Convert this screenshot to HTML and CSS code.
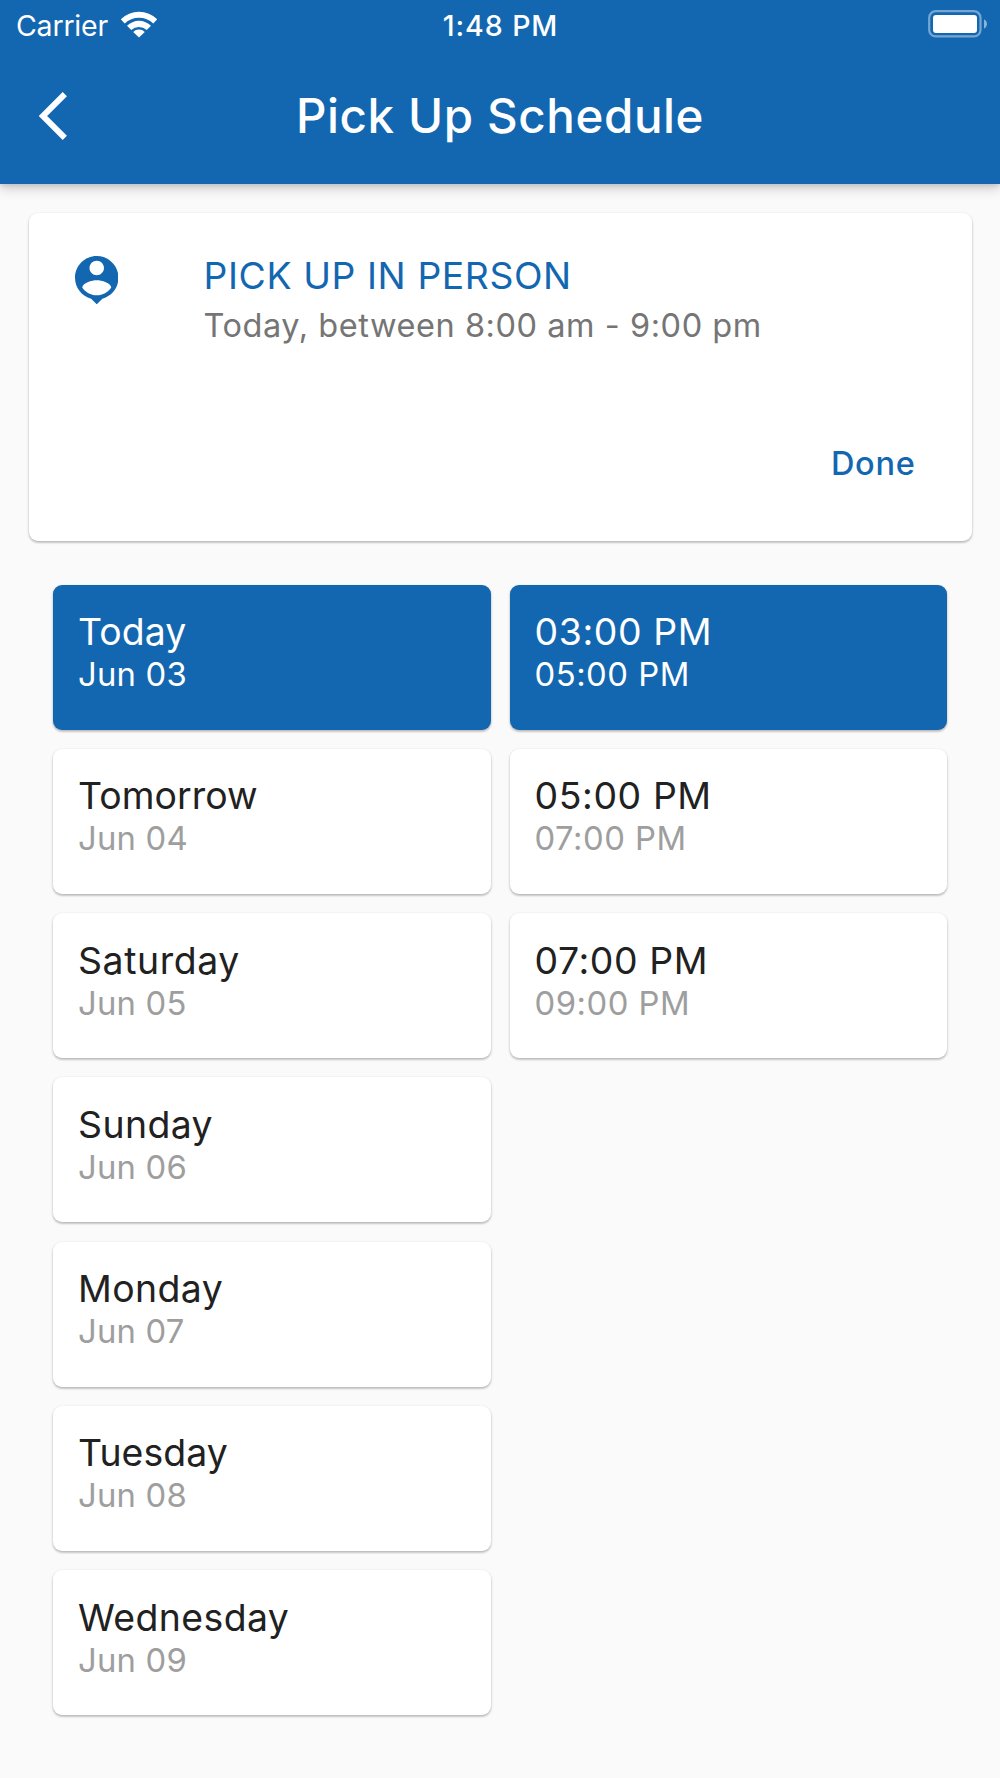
FILE: index.html
```html
<!DOCTYPE html>
<html lang="en">
<head>
<meta charset="utf-8">
<title>Pick Up Schedule</title>
<link rel="stylesheet" href="styles.css">
</head>
<body>
<header class="app-header">
  <div class="status-bar">
    <div class="status-left">
      <span class="carrier">Carrier</span>
      <svg class="wifi" viewBox="0 0 38 28" aria-hidden="true">
        <path d="M.8 9.200a26 26 0 0 1 36.400 0l-3.900 4.200a20.700 20.700 0 0 0-28.600 0z"/>
        <path d="M7 15.800a17 17 0 0 1 24 0l-4.300 4.100a11.600 11.600 0 0 0-15.400 0z"/>
        <path d="M13.200 22a8 8 0 0 1 11.600 0L19 27.600z"/>
      </svg>
    </div>
    <span class="clock">1:48 PM</span>
    <div class="status-right">
      <svg class="battery" viewBox="0 0 60 28" aria-hidden="true">
        <rect class="battery-shell" x="1.200" y="1.200" width="51.300" height="25.200" rx="6.500"/>
        <rect x="5" y="5" width="44" height="18" rx="3"/>
        <path class="battery-cap" d="M56 9.300c4 2.200 4 7 0 9.400z"/>
      </svg>
    </div>
  </div>
  <div class="toolbar">
    <svg class="back" viewBox="0 0 28 48" aria-hidden="true"><path d="M25.800 2.200 4 24l21.800 21.800"/></svg>
    <h1 class="title">Pick Up Schedule</h1>
  </div>
</header>
<main>
  <section class="card summary">
    <svg class="pin" viewBox="3 2 18 20" aria-hidden="true"><path d="M12 2c-4.970 0-9 4.030-9 9 0 4.170 2.840 7.670 6.690 8.690L12 22l2.310-2.310C18.160 18.670 21 15.170 21 11c0-4.970-4.030-9-9-9zm0 2c1.660 0 3 1.340 3 3s-1.340 3-3 3-3-1.340-3-3 1.340-3 3-3zm0 14.300c-2.500 0-4.710-1.280-6-3.220.030-1.990 4-3.080 6-3.080 1.990 0 5.970 1.090 6 3.080-1.290 1.940-3.500 3.220-6 3.220z"/></svg>
    <div class="summary-text">
      <h2 class="method">PICK UP IN PERSON</h2>
      <p class="window">Today, between 8:00 am - 9:00 pm</p>
    </div>
    <a class="done">Done</a>
  </section>
  <section class="picker">
    <div class="column days">
      <div class="card slot selected"><div class="primary tight">Today</div><div class="secondary">Jun 03</div></div>
      <div class="card slot"><div class="primary tight">Tomorrow</div><div class="secondary">Jun 04</div></div>
      <div class="card slot"><div class="primary wide">Saturday</div><div class="secondary">Jun 05</div></div>
      <div class="card slot"><div class="primary">Sunday</div><div class="secondary">Jun 06</div></div>
      <div class="card slot"><div class="primary">Monday</div><div class="secondary">Jun 07</div></div>
      <div class="card slot"><div class="primary tight">Tuesday</div><div class="secondary">Jun 08</div></div>
      <div class="card slot"><div class="primary">Wednesday</div><div class="secondary">Jun 09</div></div>
    </div>
    <div class="column times">
      <div class="card slot selected"><div class="primary">03:00 PM</div><div class="secondary">05:00 PM</div></div>
      <div class="card slot"><div class="primary">05:00 PM</div><div class="secondary">07:00 PM</div></div>
      <div class="card slot"><div class="primary">07:00 PM</div><div class="secondary">09:00 PM</div></div>
    </div>
  </section>
</main>
</body>
</html>
```
FILE: styles.css
```css
* { box-sizing: border-box; }
body {
  margin: 0;
  min-height: 1778px;
  background: #fafafa;
  color: #212121;
  font-family: Inter, "Liberation Sans", sans-serif;
  white-space: nowrap;
}
h1, h2, p { margin: 0; font-weight: 400; }
svg { display: block; fill: currentColor; }

.app-header {
  height: 183.500px;
  background: #1367b0;
  color: #fff;
  box-shadow: 0 5px 11px rgba(0, 0, 0, .17), 0 2px 4px rgba(0, 0, 0, .1);
}
.status-bar {
  display: grid;
  grid-template-columns: 1fr auto 1fr;
  align-items: start;
  height: 53px;
  padding: 10px 12px 0 16px;
}
.status-left { display: flex; gap: 12px; }
.carrier { font-size: 28.500px; line-height: 32px; letter-spacing: -.2px; }
.wifi { width: 38px; height: 28px; }
.clock { margin-left: -3px; font-size: 28.500px; line-height: 32px; font-weight: 500; letter-spacing: .95px; }
.status-right { justify-self: end; }
.battery { width: 60px; height: 28px; }
.battery-shell { fill: none; stroke: #fff; stroke-width: 2.200; opacity: .42; }
.battery-cap { opacity: .5; }

.toolbar {
  display: grid;
  grid-template-columns: 100px 1fr 100px;
  align-items: center;
  height: 126px;
}
.back { width: 28px; height: 48px; margin-left: 39px; fill: none; stroke: #fff; stroke-width: 6; }
.title { text-align: center; font-size: 47.500px; line-height: 60px; font-weight: 500; letter-spacing: .6px; }

.card {
  background: #fff;
  border-radius: 9px;
  box-shadow: 0 1px 3px rgba(0, 0, 0, .2), 0 2px 2px rgba(0, 0, 0, .12);
}
.summary {
  display: grid;
  grid-template-columns: 129px 1fr;
  grid-template-rows: 190px 40px;
  height: 328.500px;
  margin: 29.200px 28.500px 0;
  padding: 41.500px 56px 0 46px;
  color: #1367b0;
}
.pin { width: 43.500px; height: 48.300px; margin-top: 2px; }
.method { font-size: 37.300px; line-height: 44px; letter-spacing: .6px; }
.window { margin-top: 8px; font-size: 32.500px; line-height: 40px; letter-spacing: .55px; color: #757575; }
.done { grid-column: 2; justify-self: end; font-size: 32.500px; line-height: 40px; font-weight: 500; letter-spacing: .7px; }

.picker {
  display: grid;
  grid-template-columns: 1fr 1fr;
  gap: 19px;
  padding: 43.550px 53px 0;
}
.column { display: flex; flex-direction: column; gap: 19.250px; }
.slot { height: 145px; padding: 25.500px 25px 0; }
.primary { font-size: 37.400px; line-height: 44px; letter-spacing: .4px; }
.primary.tight { letter-spacing: .05px; }
.primary.wide, .times .primary { letter-spacing: .6px; }
.secondary { font-size: 32.800px; line-height: 40px; letter-spacing: .2px; color: #9e9e9e; }
.times .secondary { letter-spacing: .5px; }
.selected { background: #1367b0; }
.selected .primary, .selected .secondary { color: #fff; }
```
